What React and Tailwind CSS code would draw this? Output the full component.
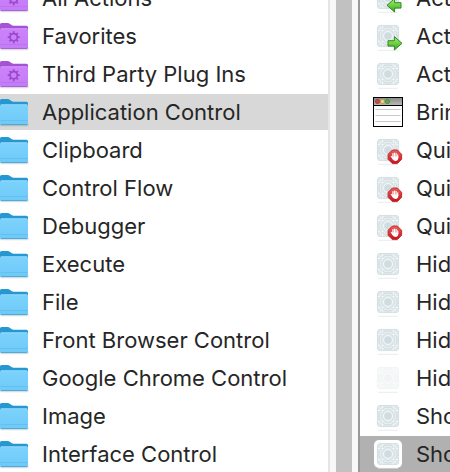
import clsx from "clsx";

const categories = [
  { name: "All Actions", smart: true },
  { name: "Favorites", smart: true },
  { name: "Third Party Plug Ins", smart: true },
  { name: "Application Control" },
  { name: "Clipboard" },
  { name: "Control Flow" },
  { name: "Debugger" },
  { name: "Execute" },
  { name: "File" },
  { name: "Front Browser Control" },
  { name: "Google Chrome Control" },
  { name: "Image" },
  { name: "Interface Control" },
];

const actions = [
  { name: "Act", badge: "left" },
  { name: "Act", badge: "right" },
  { name: "Act" },
  { name: "Brin", icon: "window" },
  { name: "Quit", badge: "stop" },
  { name: "Quit", badge: "stop" },
  { name: "Quit", badge: "stop" },
  { name: "Hide" },
  { name: "Hide" },
  { name: "Hide" },
  { name: "Hide", faded: true },
  { name: "Sho" },
  { name: "Sho" },
];

function Gradients() {
  return (
    <svg className="absolute size-0" aria-hidden="true">
      <defs>
        <linearGradient id="blueFront" x1="0" y1="0" x2="0" y2="1">
          <stop offset="0" stopColor="#7cd2fc" />
          <stop offset="1" stopColor="#6ec9f8" />
        </linearGradient>
        <linearGradient id="purpleFront" x1="0" y1="0" x2="0" y2="1">
          <stop offset="0" stopColor="#cb82f9" />
          <stop offset="1" stopColor="#c47bf7" />
        </linearGradient>
        <linearGradient id="greenArrow" x1="0" y1="0" x2="0" y2="1">
          <stop offset="0" stopColor="#a5ec70" />
          <stop offset="0.5" stopColor="#6fd044" />
          <stop offset="1" stopColor="#2fa51a" />
        </linearGradient>
        <linearGradient id="redStop" x1="0" y1="0" x2="0" y2="1">
          <stop offset="0" stopColor="#e8605f" />
          <stop offset="1" stopColor="#c41219" />
        </linearGradient>
        <linearGradient id="titleBar" x1="0" y1="0" x2="0" y2="1">
          <stop offset="0" stopColor="#8c8c8c" />
          <stop offset="1" stopColor="#b8b8b8" />
        </linearGradient>
      </defs>
    </svg>
  );
}

function FolderIcon({ smart }) {
  const back = smart ? "#a552d6" : "#2597d1";
  const edge = smart ? "#a95fd8" : "#45a8dc";
  return (
    <svg className="size-8 shrink-0" viewBox="0 0 32 32" aria-hidden="true">
      <path d="M0 27H28.500V29q0 1.300-1.500 1.300H1.500Q0 30.300 0 29z" fill="#000" opacity=".14" />
      <path d="M0 27V4.500Q0 3 1.500 3H7.500Q9 3 10 3.900L11.500 5Q12.300 5.700 13.500 5.700H26.500Q28 5.700 28 7.200V27z" fill={back} />
      <rect x="0" y="8.300" width="28" height="20.700" rx="1.600" fill={smart ? "url(#purpleFront)" : "url(#blueFront)"} />
      <path d="M1 8.800H27" stroke="#fff" strokeWidth=".7" opacity=".3" />
      <path d="M.5 24.300H27.500" stroke={edge} strokeWidth=".6" opacity=".6" />
      <path d="M1 28.500H27" stroke={edge} strokeWidth=".9" />
      {smart && (
        <g fill="none" stroke="#9a47cb" transform="translate(13.700 17.200)">
          <circle r="3.600" strokeWidth="1.700" />
          <path
            d="M0-4v-2M0 4v2M-4 0h-2M4 0h2M-2.900-2.900l-1.300-1.300M2.900 2.900l1.300 1.300M-2.900 2.900l-1.300 1.300M2.900-2.900l1.300-1.300"
            strokeWidth="1.700"
          />
        </g>
      )}
    </svg>
  );
}

function WindowIcon() {
  return (
    <svg className="size-8 shrink-0" viewBox="0 0 32 32" aria-hidden="true">
      <rect x="1.500" y="1.500" width="29" height="29" fill="#fff" stroke="#000" />
      <rect x="2" y="2" width="28" height="7" fill="url(#titleBar)" />
      <path d="M2 9.500H30" stroke="#000" />
      <circle cx="5.500" cy="5.500" r="2.200" fill="#cf4545" stroke="#873b3b" strokeWidth=".6" />
      <circle cx="10.500" cy="5.500" r="2.200" fill="#f2cd75" stroke="#a8823c" strokeWidth=".6" />
      <circle cx="15.500" cy="5.500" r="2.200" fill="#5dab45" stroke="#3d7d33" strokeWidth=".6" />
      <path d="M3.500 13.500h25M3.500 19.500h25M3.500 25.500h25" stroke="#c9c9c9" />
    </svg>
  );
}

function Badge({ kind }) {
  if (kind === "stop") {
    return (
      <g>
        <path
          d="M20.400 16h4.900l4.300 4.300v5l-4.300 4.300h-4.900l-4.300-4.300v-5z"
          fill="url(#redStop)"
          stroke="#c52a2e"
          strokeLinejoin="round"
        />
        <g stroke="#fff" strokeWidth="1.200" strokeLinecap="round" fill="none">
          <path d="M20.900 23v-3.300M22.500 23v-4M24.100 23v-3.700M25.700 23.500v-2.700M19.300 22.500l1.700 2.200" />
        </g>
        <path d="M20.300 22.500h6v1.500q-.3 2.900-3 2.900-2 0-3-2.100z" fill="#fff" />
      </g>
    );
  }
  return (
    <path
      d="M16 20.700h6.400v-4.100l7.600 6.700-7.600 6.700v-3.900H16z"
      transform={kind === "left" ? "matrix(-1 0 0 1 45 0)" : undefined}
      fill="url(#greenArrow)"
      stroke="#2f8a24"
      strokeLinejoin="round"
    />
  );
}

function AppIcon({ badge, faded }) {
  return (
    <svg className="size-8 shrink-0" viewBox="0 0 32 32" aria-hidden="true">
      <rect x="2" y="2" width="28" height="28.500" rx="5" fill="#000" opacity=".02" />
      <rect x="2" y="2" width="28" height="28" rx="5" fill="#fff" />
      <path d="M6 30.300H26" stroke="#dfe6e8" strokeWidth=".7" />
      <g opacity={faded ? 0.3 : 1}>
        <rect x="5" y="5" width="22" height="22" rx="3.500" fill="#e0e8eb" />
        <g fill="none" stroke="#f3f7f8" strokeWidth=".8">
          <rect x="8" y="8" width="16" height="16" rx="3" />
          <path d="M10.500 5.500v21M21.500 5.500v21M5.500 10.500h21M5.500 21.500h21" />
        </g>
        <g fill="none" stroke="#c6d4d9" strokeWidth=".7">
          <circle cx="16" cy="16" r="9" />
          <circle cx="16" cy="16" r="6.200" />
          <rect x="5.400" y="5.400" width="21.200" height="21.200" rx="3.300" strokeDasharray="1.500 1" />
        </g>
        <circle cx="16" cy="16" r="4.600" fill="none" stroke="#f3f7f8" strokeWidth=".8" />
        <circle cx="16" cy="16" r="3.600" fill="#cfdce1" />
      </g>
      {badge && <Badge kind={badge} />}
    </svg>
  );
}

function Row({ children, selected, className }) {
  return (
    <li>
      <button
        type="button"
        aria-pressed={Boolean(selected)}
        className={clsx("flex h-9 w-full items-center whitespace-nowrap text-left", className)}
      >
        {children}
      </button>
    </li>
  );
}

export default function App() {
  return (
    <main className="flex h-screen overflow-hidden bg-white font-['Inter',sans-serif] text-[22px] leading-7 text-[#262626]">
      <Gradients />
      <nav aria-label="Categories" className="min-w-0 flex-1 overflow-hidden">
        <ul className="-mt-5 flex flex-col gap-0.5">
          {categories.map((item, i) => (
            <Row key={item.name} selected={i === 3} className={clsx("gap-2.5", i === 3 && "bg-[#d8d8d8]")}>
              <FolderIcon smart={item.smart} />
              <span>{item.name}</span>
            </Row>
          ))}
        </ul>
      </nav>
      <div role="separator" className="w-8 shrink-0 border-l-2 border-r-2 border-l-[#e5e5e5] border-r-[#999999] bg-[#f8f8f8] px-1.5">
        <div className="h-full bg-[#c1c1c1]" />
      </div>
      <section aria-label="Actions" className="w-1/5 shrink-0 overflow-hidden">
        <ul className="-mt-5 flex flex-col gap-0.5">
          {actions.map((item, i) => (
            <Row key={i} selected={i === 12} className={clsx("gap-3 pl-3", i === 12 && "bg-[#b1b1b1]")}>
              {item.icon === "window" ? <WindowIcon /> : <AppIcon badge={item.badge} faded={item.faded} />}
              <span>{item.name}</span>
            </Row>
          ))}
        </ul>
      </section>
    </main>
  );
}
